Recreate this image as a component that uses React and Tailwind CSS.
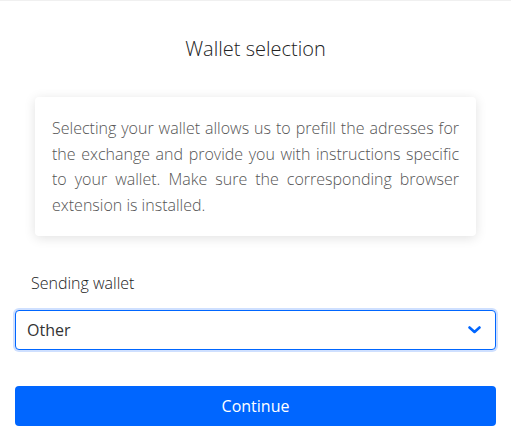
import { useState } from 'react';

const Chevron = () => (
  <svg width="13" height="8" viewBox="0 0 13 8" fill="none">
    <path d="M1.5 1.5L6.5 6L11.5 1.5" stroke="#0066ff" strokeWidth="2.6" strokeLinecap="round" strokeLinejoin="round" />
  </svg>
);

const App = () => {
  const [wallet, setWallet] = useState('Other');

  return (
    <div className="w-[511px] h-[440px] bg-white border-t border-[#f0f0f0] font-['Open_Sans',sans-serif]">
      <h1 className="pt-[35px] text-center text-[20px] font-light leading-[26px] text-[#222]">
        Wallet selection
      </h1>

      <div className="mx-[35px] mt-[35px] rounded-[4px] bg-white px-[17px] pt-[19px] pb-[17px] shadow-[0_2px_12px_rgba(0,0,0,0.12)]">
        <p className="text-justify text-[16px] font-light leading-[25.7px] text-[#555]">
          Selecting your wallet allows us to prefill the adresses for the exchange and provide you with instructions specific to your wallet. Make sure the corresponding browser extension is installed.
        </p>
      </div>

      <div className="mx-[15px] mt-[36px]">
        <label className="block pl-[16px] text-[16px] font-light leading-[22px] text-[#222]">Sending wallet</label>
        <div className="relative mt-[16px]">
          <select
            value={wallet}
            onChange={(e) => setWallet(e.target.value)}
            className="h-[40px] w-full appearance-none rounded-[4px] border border-[#0066ff] bg-white pl-[11px] text-[16px] text-[#333] outline-none ring-2 ring-[#cfe0ff]"
          >
            <option>Other</option>
            <option>MetaMask</option>
            <option>Ledger</option>
          </select>
          <span className="pointer-events-none absolute right-[15px] top-[16px]">
            <Chevron />
          </span>
        </div>
        <button className="mt-[36px] h-[40px] w-full rounded-[4px] bg-[#0066ff] text-[16px] text-white">
          Continue
        </button>
      </div>
    </div>
  );
};

export default App;
